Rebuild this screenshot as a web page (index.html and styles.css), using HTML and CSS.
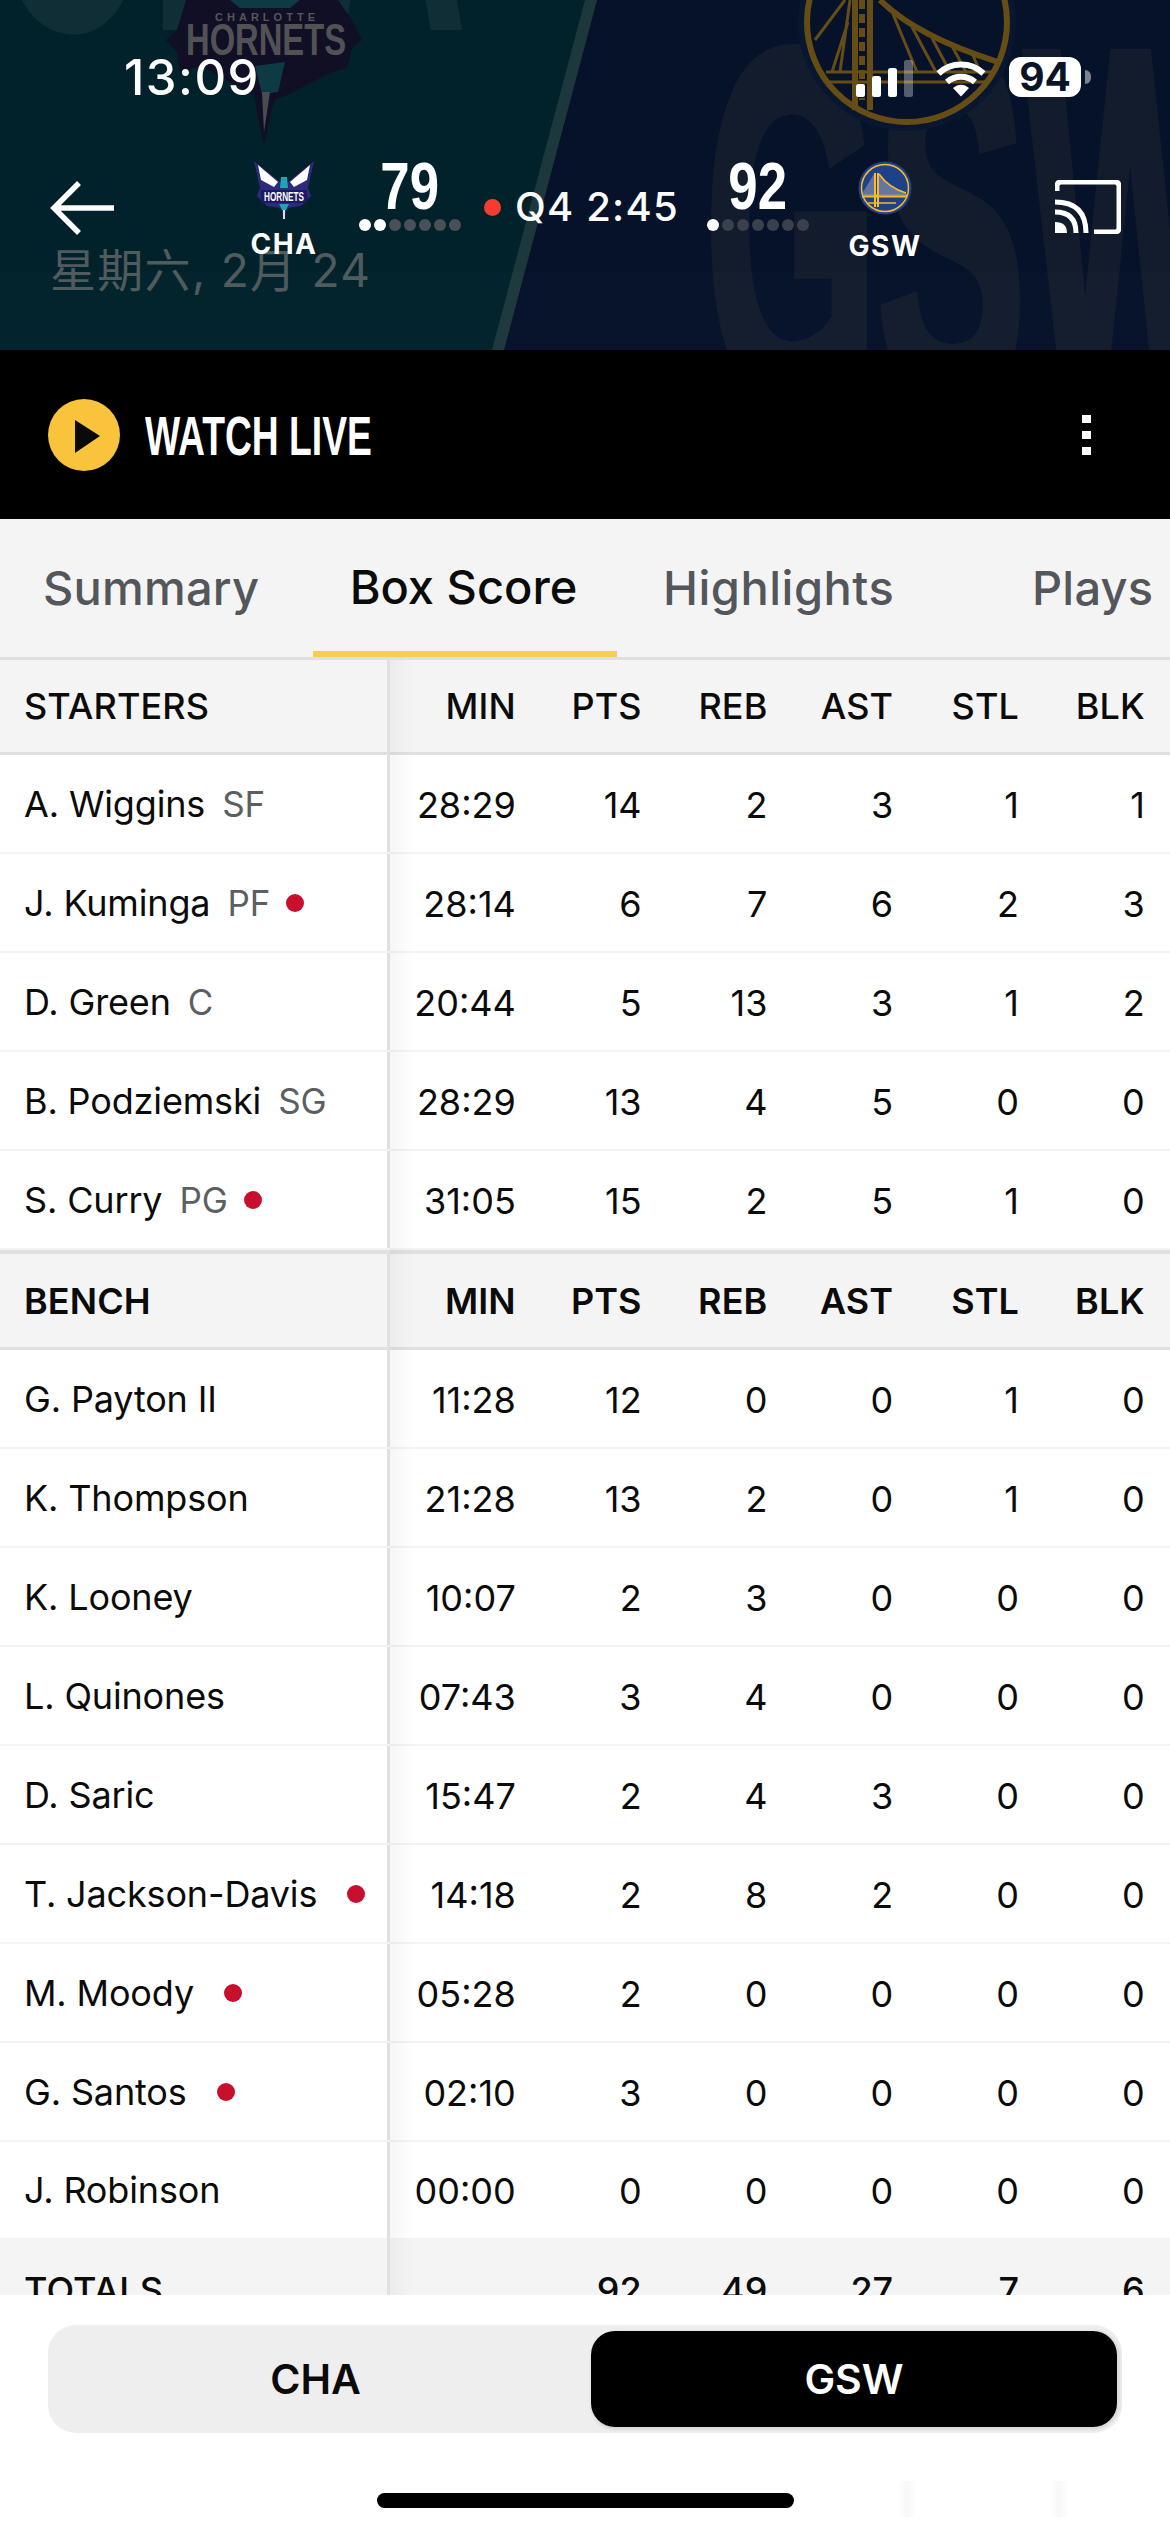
FILE: index.html
```html
<!DOCTYPE html>
<html lang="en">
<head>
<meta charset="utf-8">
<title>Box Score</title>
<link rel="stylesheet" href="styles.css">
</head>
<body>
<div class="app">
  <header class="hero">
    <svg class="hero-bg" viewBox="0 0 1170 350" width="1170" height="350" aria-hidden="true">
      <rect width="1170" height="350" fill="#02222b"/>
      <text x="-12" y="30" font-family="Liberation Sans" font-weight="700" font-size="460" fill="#0f2e36" textLength="480" lengthAdjust="spacingAndGlyphs">CHA</text>
      <polygon points="597,0 1170,0 1170,350 504,350" fill="#06122a"/>
      <polygon points="585,0 597,0 504,350 492,350" fill="#1c383d"/>
      <text x="705" y="400" font-family="Liberation Sans" font-weight="700" font-size="500" fill="#121c2d" stroke="#121c2d" stroke-width="14" textLength="530" lengthAdjust="spacingAndGlyphs">GSW</text>
      <rect y="272" width="1170" height="78" fill="#ffffff" opacity="0.012"/>
      <!-- big Hornets crest -->
      <polygon points="186,0 177,30 166,40 177,52 180,72 200,66 254,95 264,146 274,100 287,95 332,72 347,68 352,48 362,40 352,20 338,0" fill="#100f26"/>
      <polygon points="230,0 300,0 290,8 240,8" fill="#0d3a44"/>
      <polygon points="255,66 285,62 278,92 262,94" fill="#0d3a44"/>
      <polygon points="262,92 270,92 264,132" fill="#4a4c50"/>
      <text x="215" y="21" font-family="Liberation Sans" font-weight="700" font-size="11" fill="#55575b" textLength="100" lengthAdjust="spacing">CHARLOTTE</text>
      <text x="186" y="55" font-family="Liberation Sans" font-weight="700" font-size="44" fill="#525255" textLength="160" lengthAdjust="spacingAndGlyphs">HORNETS</text>
      <!-- big Warriors crest -->
      <circle cx="907" cy="22" r="109" fill="#081630"/>
      <circle cx="907" cy="22" r="100" fill="#06122a" stroke="#664c15" stroke-width="6"/>
      <g fill="none" stroke="#664c15">
        <path d="M855 0V110M870 0V110" stroke-width="6"/>
        <path d="M862 0V100" stroke-width="6" stroke-dasharray="9 5"/>
        <path d="M826 72H996M826 82H985" stroke-width="3"/>
        <path d="M880 0C910 30 960 50 998 62" stroke-width="6"/>
        <path d="M893 14L917 72M912 27L936 72M932 38L950 72M952 46L966 72M972 53L980 72" stroke-width="3"/>
        <path d="M845 0L815 40M848 22L832 72M850 0L840 72" stroke-width="3"/>
      </g>
    </svg>

    <div class="status">
      <span class="time">13:09</span>
      <div class="status-icons">
        <svg class="signal" viewBox="0 0 57 37" width="57" height="37" aria-hidden="true">
          <rect x="0" y="24" width="9" height="13" rx="2.5" fill="#fff"/>
          <rect x="16" y="16" width="9" height="21" rx="2.5" fill="#fff"/>
          <rect x="32" y="8" width="9" height="29" rx="2.5" fill="#fff"/>
          <rect x="48" y="0" width="9" height="37" rx="2.5" fill="#fff" opacity="0.32"/>
        </svg>
        <svg class="wifi" viewBox="0 0 50 37" width="50" height="37" aria-hidden="true">
          <path d="M2.500 13.500C15 1.500 35 1.500 47.500 13.500" fill="none" stroke="#fff" stroke-width="6"/>
          <path d="M11 22C19 15 31 15 39 22" fill="none" stroke="#fff" stroke-width="6"/>
          <path d="M17 28C22 23.500 28 23.500 33 28L25 36.500Z" fill="#fff"/>
        </svg>
        <div class="battery"><span class="battery-num">94</span><i class="battery-cap"></i></div>
      </div>
    </div>

    <div class="nav">
      <svg class="back" viewBox="0 0 66 56" width="66" height="56" aria-hidden="true">
        <path d="M64 28H5M29 3L4 28L29 53" fill="none" stroke="#fff" stroke-width="5.500"/>
      </svg>
      <div class="team team-cha">
        <svg class="team-logo" viewBox="0 0 62 60" width="62" height="60" aria-hidden="true">
          <polygon points="1,1 27,22 31,18 35,22 61,1 55,28 58,36 48,46 34,48 31,60 28,48 14,46 4,36 7,28" fill="#2c2a7a"/>
          <polygon points="5,5 25,22 21,27 8,20" fill="#fff"/>
          <polygon points="57,5 37,22 41,27 54,20" fill="#fff"/>
          <polygon points="28,17 34,17 35,28 27,28" fill="#1fa3b5"/>
          <rect x="8" y="30" width="46" height="13" fill="#1d1a63"/>
          <text x="31" y="41" text-anchor="middle" font-family="Liberation Sans" font-weight="700" font-size="12" fill="#fff" textLength="40" lengthAdjust="spacingAndGlyphs">HORNETS</text>
          <polygon points="26,44 36,44 33,50 29,50" fill="#1fa3b5"/>
          <rect x="30" y="50" width="2" height="9" fill="#d8e0e8"/>
        </svg>
        <span class="team-code">CHA</span>
      </div>
      <div class="score">
        <span class="score-num">79</span>
        <div class="dots"><i class="dot-on"></i><i class="dot-on"></i><i></i><i></i><i></i><i></i><i></i></div>
      </div>
      <div class="clock"><i class="live"></i><span>Q4 2:45</span></div>
      <div class="score score-away">
        <span class="score-num">92</span>
        <div class="dots"><i class="dot-on"></i><i></i><i></i><i></i><i></i><i></i><i></i></div>
      </div>
      <div class="team team-gsw">
        <svg class="team-logo" viewBox="0 0 54 54" width="54" height="54" aria-hidden="true">
          <circle cx="27" cy="27" r="26.500" fill="#1d428a"/>
          <circle cx="27" cy="27" r="23.500" fill="#1d428a" stroke="#fdb927" stroke-width="1.500"/>
          <path d="M17 12V46M20 12V46" stroke="#fdb927" stroke-width="2" fill="none"/>
          <path d="M4 35H49" stroke="#fdb927" stroke-width="3" fill="none"/>
          <path d="M21 13C28 23 38 29 48 32L48 35H21Z" fill="#7c8aa8" opacity="0.75"/>
          <path d="M21 13C28 23 38 29 48 32" stroke="#fdb927" stroke-width="1.600" fill="none"/>
          <path d="M16 13L5 31V35H16Z" fill="#7c8aa8" opacity="0.7"/>
          <path d="M10 42H38" stroke="#fdb927" stroke-width="1.500" fill="none"/>
        </svg>
        <span class="team-code">GSW</span>
      </div>
      <svg class="cast" viewBox="0 0 66 54" width="66" height="54" aria-hidden="true">
        <path d="M2 11V6Q2 2 6 2H60Q64 2 64 6V48Q64 52 60 52H39" fill="none" stroke="#fff" stroke-width="5"/>
        <path d="M0 53H12Q12 42 0 42Z" fill="#fff"/>
        <path d="M0 32Q21 32 21 53" fill="none" stroke="#fff" stroke-width="5"/>
        <path d="M0 22Q31 22 31 53" fill="none" stroke="#fff" stroke-width="5"/>
      </svg>
    </div>
    <span class="date">星期六, 2月 24</span>
  </header>

  <section class="watch">
    <div class="watch-play">
      <svg viewBox="0 0 72 72" width="72" height="72" aria-hidden="true"><polygon points="27,21 52,37 27,54" fill="#0a0a0a"/></svg>
    </div>
    <span class="watch-text">WATCH LIVE</span>
    <div class="menu"><i></i><i></i><i></i></div>
  </section>

  <nav class="tabs">
    <span class="tab tab-summary">Summary</span>
    <span class="tab tab-box">Box Score</span>
    <span class="tab tab-high">Highlights</span>
    <span class="tab tab-plays">Plays</span>
  </nav>

  <main class="table">
    <div class="row head"><div class="player">STARTERS</div><div>MIN</div><div>PTS</div><div>REB</div><div>AST</div><div>STL</div><div>BLK</div></div>
    <div class="row"><div class="player">A. Wiggins<span class="pos">SF</span></div><div>28:29</div><div>14</div><div>2</div><div>3</div><div>1</div><div>1</div></div>
    <div class="row"><div class="player">J. Kuminga<span class="pos">PF</span><i class="court"></i></div><div>28:14</div><div>6</div><div>7</div><div>6</div><div>2</div><div>3</div></div>
    <div class="row"><div class="player">D. Green<span class="pos">C</span></div><div>20:44</div><div>5</div><div>13</div><div>3</div><div>1</div><div>2</div></div>
    <div class="row"><div class="player">B. Podziemski<span class="pos">SG</span></div><div>28:29</div><div>13</div><div>4</div><div>5</div><div>0</div><div>0</div></div>
    <div class="row"><div class="player">S. Curry<span class="pos">PG</span><i class="court"></i></div><div>31:05</div><div>15</div><div>2</div><div>5</div><div>1</div><div>0</div></div>
    <div class="row head head-bench"><div class="player">BENCH</div><div>MIN</div><div>PTS</div><div>REB</div><div>AST</div><div>STL</div><div>BLK</div></div>
    <div class="row"><div class="player">G. Payton II</div><div>11:28</div><div>12</div><div>0</div><div>0</div><div>1</div><div>0</div></div>
    <div class="row"><div class="player">K. Thompson</div><div>21:28</div><div>13</div><div>2</div><div>0</div><div>1</div><div>0</div></div>
    <div class="row"><div class="player">K. Looney</div><div>10:07</div><div>2</div><div>3</div><div>0</div><div>0</div><div>0</div></div>
    <div class="row"><div class="player">L. Quinones</div><div>07:43</div><div>3</div><div>4</div><div>0</div><div>0</div><div>0</div></div>
    <div class="row"><div class="player">D. Saric</div><div>15:47</div><div>2</div><div>4</div><div>3</div><div>0</div><div>0</div></div>
    <div class="row"><div class="player">T. Jackson-Davis<i class="court court-solo"></i></div><div>14:18</div><div>2</div><div>8</div><div>2</div><div>0</div><div>0</div></div>
    <div class="row"><div class="player">M. Moody<i class="court court-solo"></i></div><div>05:28</div><div>2</div><div>0</div><div>0</div><div>0</div><div>0</div></div>
    <div class="row"><div class="player">G. Santos<i class="court court-solo"></i></div><div>02:10</div><div>3</div><div>0</div><div>0</div><div>0</div><div>0</div></div>
    <div class="row row-last"><div class="player">J. Robinson</div><div>00:00</div><div>0</div><div>0</div><div>0</div><div>0</div><div>0</div></div>
    <div class="row totals"><div class="player">TOTALS</div><div></div><div>92</div><div>49</div><div>27</div><div>7</div><div>6</div></div>
  </main>

  <footer class="footer">
    <div class="segment">
      <span class="seg-item">CHA</span>
      <span class="seg-item seg-active">GSW</span>
    </div>
    <div class="home-bar"></div>
    <i class="ghost ghost-a"></i>
    <i class="ghost ghost-b"></i>
  </footer>
</div>
</body>
</html>
```
FILE: styles.css
```css
* { box-sizing: border-box; }
html, body { margin: 0; padding: 0; background: #fff; }
body { font-family: Inter, "Noto Sans CJK SC", sans-serif; color: #0b0b0b; }
i { display: block; font-style: normal; }

.app { width: 1170px; height: 2532px; display: flex; flex-direction: column; overflow: hidden; }

/* Hero */
.hero { position: relative; height: 350px; flex: none; overflow: hidden; color: #fff; padding-top: 57px; }
.hero-bg { position: absolute; inset: 0; display: block; }
.status { position: relative; display: flex; justify-content: space-between; height: 40px; padding: 0 89px 0 124px; align-items: center; }
.time { font-size: 49px; font-weight: 500; line-height: 40px; letter-spacing: 1.5px; position: relative; top: 1px; }
.status-icons { display: flex; align-items: center; gap: 23px; }
.signal, .wifi { display: block; margin-top: 2px; }
.battery { position: relative; width: 72px; height: 40px; background: #fff; border-radius: 12px; display: flex; align-items: center; justify-content: center; }
.battery-num { color: #0a1428; font-size: 39px; font-weight: 700; line-height: 40px; }
.battery-cap { position: absolute; left: 76px; top: 13px; width: 6px; height: 14px; border-radius: 0 7px 7px 0; background: #7d828c; }

.nav { position: relative; display: flex; align-items: flex-start; margin-top: 63px; padding-left: 50px; }
.back { flex: none; margin-top: 20px; display: block; }
.team { flex: none; width: 100px; display: flex; flex-direction: column; align-items: center; }
.team-cha { margin-left: 118px; }
.team-gsw { margin-left: 26px; margin-top: 1px; }
.team-logo { display: block; }
.team-gsw .team-logo { margin-bottom: 16px; }
.team-cha .team-logo { margin-bottom: 9px; }
.team-code { font-size: 28px; font-weight: 700; line-height: 30px; letter-spacing: 1.5px; }
.score { flex: none; width: 102px; display: flex; flex-direction: column; align-items: center; margin-left: 25px; }
.score-away { margin-left: 31px; }
.score-num { font-family: "Liberation Sans", sans-serif; font-weight: 700; font-size: 66px; line-height: 52px; height: 52px; transform: scaleX(0.8); }
.dots { display: flex; gap: 3px; margin-top: 7px; }
.dots i { width: 12px; height: 12px; border-radius: 50%; background: #4a5156; }
.dots .dot-on { background: #fff; }
.score-away .dots i { background: #3a404c; }
.score-away .dots .dot-on { background: #fff; }
.clock { flex: none; display: flex; align-items: center; margin-left: 23px; margin-top: 27px; width: 192px; font-size: 40px; font-weight: 500; line-height: 40px; letter-spacing: 1.2px; white-space: nowrap; }
.live { width: 17px; height: 17px; border-radius: 50%; background: #f63b30; margin-right: 14px; flex: none; }
.cast { flex: none; margin-left: 120px; margin-top: 20px; display: block; }
.date { position: absolute; left: 50px; top: 240px; font-size: 46px; line-height: 60px; letter-spacing: 1.3px; color: #4f5b5d; white-space: nowrap; }
.team, .score, .clock { z-index: 1; position: relative; }

/* Watch bar */
.watch { flex: none; height: 169px; background: #000; display: flex; align-items: center; padding: 0 79px 0 48px; color: #fff; }
.watch-play { width: 72px; height: 72px; border-radius: 50%; background: #f9c33c; flex: none; }
.watch-play svg { display: block; }
.watch-text { margin-left: 25px; margin-top: 3px; width: 225px; flex: none; font-family: "Liberation Sans", sans-serif; font-weight: 700; font-size: 56px; line-height: 60px; white-space: nowrap; transform: scaleX(0.665); transform-origin: left center; }
.menu { margin-left: auto; display: flex; flex-direction: column; gap: 8px; }
.menu i { width: 9px; height: 8px; background: #fff; }

/* Tabs */
.tabs { flex: none; height: 141px; background: #f4f4f5; border-bottom: 3px solid #dfdfdf; display: flex; align-items: stretch; font-size: 47px; font-weight: 500; color: #53575b; white-space: nowrap; }
.tab { display: flex; align-items: center; padding-bottom: 2px; }
.tab-summary { margin-left: 43px; width: 215px; letter-spacing: 0.2px; }
.tab-box { margin-left: 55px; width: 304px; justify-content: center; color: #0b0b0b; border-bottom: 6px solid #f6cf4e; padding: 2px 3px 0 0; }
.tab-high { margin-left: 46px; width: 229px; letter-spacing: 0.5px; }
.tab-plays { margin-left: 140px; letter-spacing: 0.2px; }

/* Table */
.table { flex: 1; min-height: 0; overflow: hidden; position: relative; }
.table::after { content: ""; position: absolute; top: 0; bottom: 0; left: 390px; width: 24px; background: linear-gradient(90deg, rgba(0,0,0,0.035), rgba(0,0,0,0)); }
.row { display: grid; grid-template-columns: 390px repeat(6, 125.8px); height: 99px; padding-top: 2px; border-bottom: 2.5px solid #f3f3f3; font-size: 36px; line-height: 44px; color: #0b0b0b; align-items: stretch; }
.row > div { display: flex; align-items: center; justify-content: flex-end; white-space: nowrap; }
.row > .player { justify-content: flex-start; padding-left: 24px; margin-top: -2px; border-right: 3px solid #dfe0e0; letter-spacing: -0.15px; }
.pos { margin-left: 17px; font-size: 35px; color: #5b5f62; }
.court { width: 18px; height: 18px; border-radius: 50%; background: #c8102e; margin-left: 16px; flex: none; }
.court-solo { margin-left: 30px; }
.row-last { height: 96px; border-bottom: 0; }
.head { height: 95px; padding-top: 0; background: #f4f4f5; border-bottom: 3px solid #dfe0e0; font-weight: 500; letter-spacing: 0.1px; }
.head > .player { margin-top: 0; letter-spacing: 0.1px; }
.head-bench { height: 100px; border-top: 4px solid #dfe0e0; font-weight: 600; }
.totals { background: #f4f4f4; border-bottom: 0; font-weight: 500; padding-top: 6px; height: 98px; }
.totals > .player { margin-top: -6px; padding-top: 6px; letter-spacing: 0.1px; }

/* Footer */
.footer { flex: none; height: 237px; background: #fff; position: relative; padding-top: 30px; }
.segment { margin: 0 48px; height: 108px; background: #eeeeef; border-radius: 28px; display: flex; padding: 6px 5px 6px 0; }
.seg-item { flex: 1; display: flex; align-items: center; justify-content: center; font-size: 41px; font-weight: 600; }
.seg-item:first-child { flex: none; width: 535px; margin-right: 8px; }
.seg-active { background: #000; color: #fff; border-radius: 24px; box-shadow: 0 3px 3px #d9d9d9, 3px 0 3px #dcdcdc; }
.home-bar { position: absolute; left: 377px; top: 198px; width: 417px; height: 15px; border-radius: 8px; background: #000; }
.ghost { position: absolute; top: 186px; width: 18px; height: 36px; background: linear-gradient(90deg, #fff, #f7f7f7, #fff); }
.ghost-a { left: 898px; }
.ghost-b { left: 1050px; }
```
